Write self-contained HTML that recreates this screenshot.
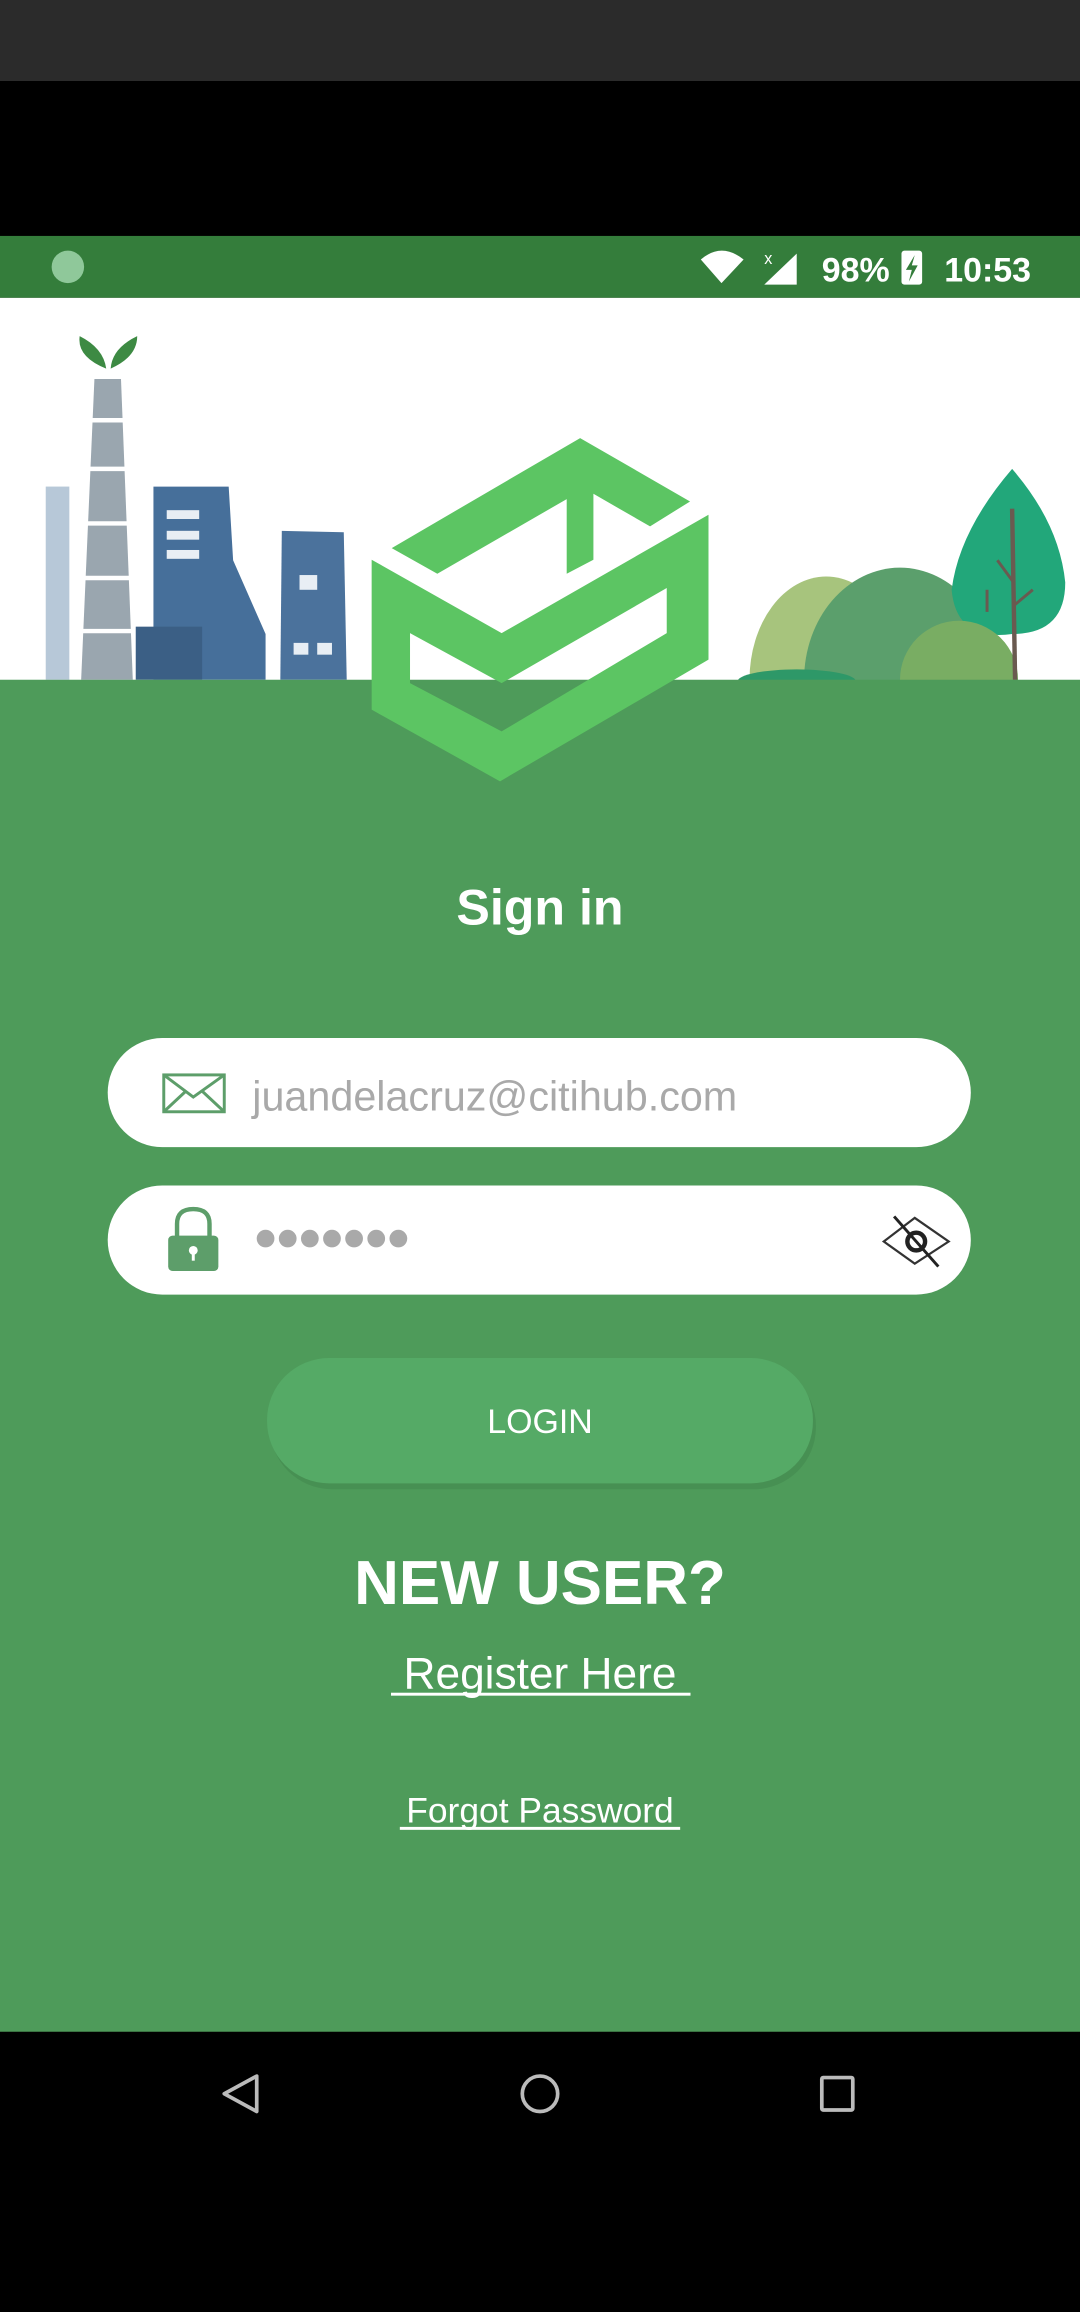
<!DOCTYPE html>
<html><head><meta charset="utf-8"><style>
html,body{margin:0;padding:0;width:1080px;height:2312px;overflow:hidden;background:#000}
svg{display:block}
text{font-family:"Liberation Sans",sans-serif}
</style></head><body>
<svg width="1080" height="2312" viewBox="0 0 732 1568" preserveAspectRatio="none">
<rect x="0" y="0" width="732" height="55" fill="#2b2b2b"/>
<rect x="0" y="55" width="732" height="105" fill="#000"/>
<!-- status bar -->
<rect x="0" y="160" width="732" height="42" fill="#347d3b"/>
<circle cx="46" cy="181" r="11" fill="#8fc89a"/>
<path d="M475 176 Q489 164 504 176 L489 192 Z" fill="#fff"/>
<path d="M518 193 L540 172 L540 193 Z" fill="#fff"/>
<text x="518" y="179" font-size="11" fill="#fff">x</text>
<text x="557" y="191" font-size="23" font-weight="bold" fill="#fff">98%</text>
<rect x="611" y="170" width="14" height="23" rx="2" fill="#fff"/>
<path d="M620 173 L614 183 L618 183 L616 191 L622 180 L618 180 Z" fill="#347d3b"/>
<text x="640" y="191" font-size="23" font-weight="bold" fill="#fff">10:53</text>
<!-- white header -->
<rect x="0" y="202" width="732" height="260" fill="#fff"/>
<!-- chimney -->
<rect x="31" y="330" width="16" height="131" fill="#b7c8d8"/>
<path d="M64 257 L82 257 L90 461 L55 461 Z" fill="#9aa6af"/>
<g stroke="#fff" stroke-width="3"><line x1="60" y1="285" x2="86" y2="285"/><line x1="58" y1="318" x2="87" y2="318"/><line x1="57" y1="355" x2="88" y2="355"/><line x1="56" y1="392" x2="89" y2="392"/><line x1="55" y1="428" x2="90" y2="428"/></g>
<path d="M72 250 Q52 242 54 228 Q70 236 72 250Z M75 250 Q93 242 93 228 Q76 236 75 250Z" fill="#3d8a43"/>
<path d="M104 330 L155 330 L158 380 L180 430 L180 461 L104 461 Z" fill="#466f9a"/>
<rect x="92" y="425" width="45" height="36" fill="#3b5f85"/>
<rect x="113" y="346" width="22" height="6" fill="#e8eef4"/><rect x="113" y="360" width="22" height="6" fill="#e8eef4"/><rect x="113" y="373" width="22" height="6" fill="#e8eef4"/>
<path d="M191 360 L233 361 L235 461 L190 461 Z" fill="#4b729c"/>
<rect x="203" y="390" width="12" height="10" fill="#e8eef4"/><rect x="199" y="436" width="10" height="8" fill="#e8eef4"/><rect x="215" y="436" width="10" height="8" fill="#e8eef4"/>
<!-- hills & tree -->
<ellipse cx="560" cy="461" rx="52" ry="70" fill="#a7c47d"/>
<ellipse cx="610" cy="461" rx="65" ry="76" fill="#5b9f6c"/>
<path d="M686 318 Q650 360 645 400 Q648 435 686 430 Q722 430 722 395 Q718 355 686 318Z" fill="#22a77a"/>
<ellipse cx="650" cy="461" rx="40" ry="40" fill="#79ad63"/>
<path d="M686 345 L688 461" stroke="#6a5a50" stroke-width="3"/>
<path d="M687 395 L676 380 M669 415 L669 400 M688 410 L700 400" stroke="#6a5a50" stroke-width="2"/>
<ellipse cx="540" cy="462" rx="40" ry="8" fill="#2e9868"/>
<!-- green body -->
<rect x="0" y="461" width="732" height="917" fill="#4e9b5a"/>
<!-- logo -->
<g fill="#5cc563">
<polygon points="265.5,371.7 393.2,297.1 467.7,340.1 440.6,357 402.2,334.9 402.2,379.6 384.1,389.1 384.1,338.5 296.4,389.1"/>
<path fill-rule="evenodd" d="M251.9 379.6 L340 429.4 L480.2 349.1 L480.2 447.4 L338.9 529.9 L251.9 481.3 Z M277.9 429.4 L340 463.3 L451.9 398.8 L451.9 429.4 L340 496 L277.9 463.3 Z"/>
</g>
<text x="366" y="627" font-size="34" font-weight="bold" fill="#fff" text-anchor="middle">Sign in</text>
<!-- inputs -->
<rect x="73" y="704" width="585" height="74" rx="37" fill="#fff"/>
<rect x="111" y="729" width="41" height="25" fill="none" stroke="#5d9e6a" stroke-width="2"/>
<path d="M111 729 L131 744 L152 729 M111 754 L126 740 M152 754 L137 740" fill="none" stroke="#5d9e6a" stroke-width="2"/>
<text x="171" y="753" font-size="28" fill="#a9a9a9">juandelacruz@citihub.com</text>
<rect x="73" y="804" width="585" height="74" rx="37" fill="#fff"/>
<path d="M120 843 L120 830 Q120 820 131 820 Q142 820 142 830 L142 843" fill="none" stroke="#5d9e6a" stroke-width="3"/>
<rect x="114" y="838" width="34" height="24" rx="3" fill="#5d9e6a"/>
<circle cx="131" cy="848" r="3" fill="#fff"/><rect x="130" y="849" width="2" height="6" fill="#fff"/>
<g fill="#a9a9a9"><circle cx="180" cy="840" r="6"/><circle cx="195" cy="840" r="6"/><circle cx="210" cy="840" r="6"/><circle cx="225" cy="840" r="6"/><circle cx="240" cy="840" r="6"/><circle cx="255" cy="840" r="6"/><circle cx="270" cy="840" r="6"/></g>
<path d="M599 842 L620 826 L643 842 L620 857 Z" fill="none" stroke="#333" stroke-width="1.5"/>
<circle cx="621" cy="842" r="6" fill="none" stroke="#222" stroke-width="3"/>
<line x1="606" y1="825" x2="636" y2="859" stroke="#222" stroke-width="2"/>
<!-- login -->
<rect x="183" y="925" width="370" height="85" rx="42" fill="#3f8049" opacity="0.4"/>
<rect x="181" y="921" width="370" height="85" rx="42" fill="#55aa66"/>
<text x="366" y="972" font-size="23" fill="#fff" text-anchor="middle">LOGIN</text>
<text x="366" y="1088" font-size="42" font-weight="bold" fill="#fff" text-anchor="middle">NEW USER?</text>
<text x="366" y="1145" font-size="30" fill="#fff" text-anchor="middle">Register Here</text>
<rect x="265" y="1148" width="203" height="2" fill="#fff"/>
<text x="366" y="1236" font-size="24" fill="#fff" text-anchor="middle">Forgot Password</text>
<rect x="271" y="1239" width="190" height="2" fill="#fff"/>
<!-- nav -->
<rect x="0" y="1378" width="732" height="190" fill="#000"/>
<path d="M174 1408 L152 1420 L174 1432 Z" fill="none" stroke="#bbb" stroke-width="2.5" stroke-linejoin="round"/>
<circle cx="366" cy="1420" r="12" fill="none" stroke="#bbb" stroke-width="2.5"/>
<rect x="557" y="1409" width="21" height="22" rx="1" fill="none" stroke="#bbb" stroke-width="2.5"/>
</svg>
</body></html>
